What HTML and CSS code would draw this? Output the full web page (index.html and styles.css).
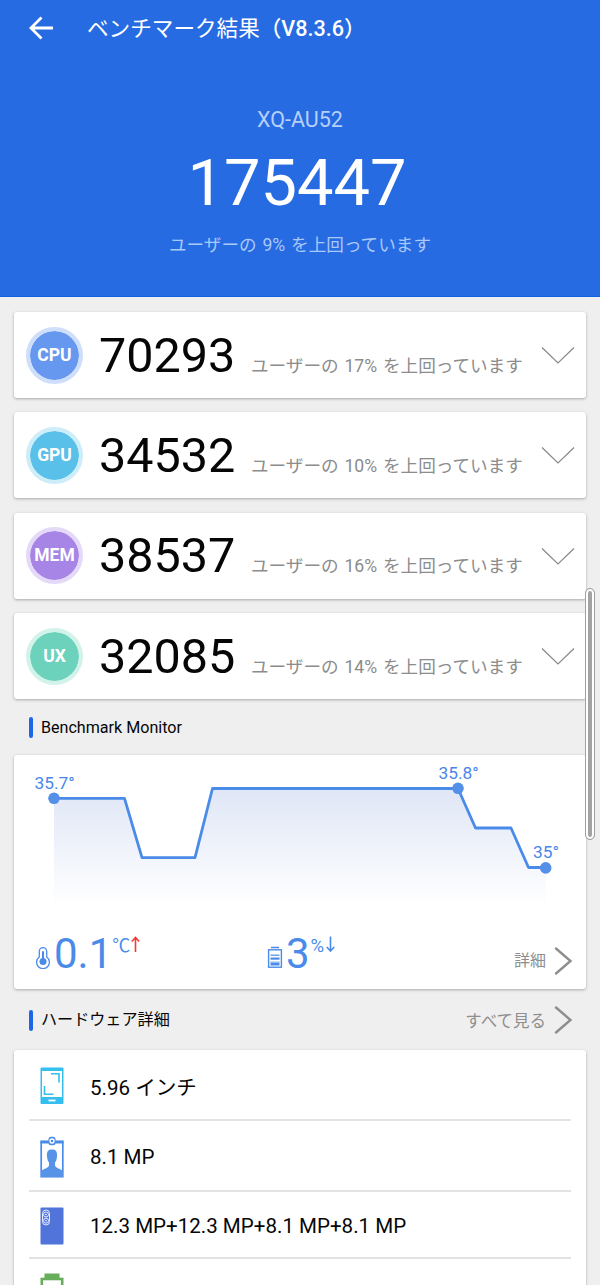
FILE: index.html
```html
<!DOCTYPE html>
<html lang="ja">
<head>
  <meta charset="UTF-8">
  <meta name="viewport" content="width=device-width, initial-scale=1">
  <title>ベンチマーク結果</title>
  <link rel="stylesheet" href="styles.css">
</head>
<body>
  <header class="header">
    <div class="topbar">
      <svg class="back" width="26" height="26" viewBox="0 0 26 26">
        <path d="M25 13H3M13.5 2.5L3 13L13.5 23.5" fill="none" stroke="#fff" stroke-width="2.8"/>
      </svg>
      <h1>ベンチマーク結果<span class="version">（V8.3.6）</span></h1>
    </div>
    <div class="device">XQ-AU52</div>
    <div class="total">175447</div>
    <div class="rank">ユーザーの 9% を上回っています</div>
  </header>

  <main>
    <section class="scores">
      <div class="card score">
        <div class="badge cpu">CPU</div>
        <div class="value">70293</div>
        <div class="note">ユーザーの 17% を上回っています</div>
        <svg class="chevron" width="34" height="20" viewBox="0 0 34 20"><path d="M1 2.500L17 18L33 2.500"/></svg>
      </div>
      <div class="card score">
        <div class="badge gpu">GPU</div>
        <div class="value">34532</div>
        <div class="note">ユーザーの 10% を上回っています</div>
        <svg class="chevron" width="34" height="20" viewBox="0 0 34 20"><path d="M1 2.500L17 18L33 2.500"/></svg>
      </div>
      <div class="card score">
        <div class="badge mem">MEM</div>
        <div class="value">38537</div>
        <div class="note">ユーザーの 16% を上回っています</div>
        <svg class="chevron" width="34" height="20" viewBox="0 0 34 20"><path d="M1 2.500L17 18L33 2.500"/></svg>
      </div>
      <div class="card score">
        <div class="badge ux">UX</div>
        <div class="value">32085</div>
        <div class="note">ユーザーの 14% を上回っています</div>
        <svg class="chevron" width="34" height="20" viewBox="0 0 34 20"><path d="M1 2.500L17 18L33 2.500"/></svg>
      </div>
    </section>

    <div class="section-title monitor-title">
      <h2>Benchmark Monitor</h2>
    </div>

    <section class="card monitor">
      <svg class="chart" width="572" height="165" viewBox="14 755 572 165">
        <defs>
          <linearGradient id="fade" gradientUnits="userSpaceOnUse" x1="0" y1="788" x2="0" y2="906">
            <stop offset="0" stop-color="#dfe6f6"/>
            <stop offset="1" stop-color="#fff"/>
          </linearGradient>
        </defs>
        <path fill="url(#fade)" d="M54 798H124.500L142 857.500H195L212.500 788.500H458L475.500 828H511L528.500 867.500H546V906H54Z"/>
        <path class="line" d="M54 798.300H124.500L142 857.700H195L212.500 788.500H458L475.500 828H511L528.500 867.500H546"/>
        <circle cx="54" cy="798.300" r="5.800"/>
        <circle cx="458" cy="788.300" r="5.800"/>
        <circle cx="545.700" cy="867.900" r="5.800"/>
        <text x="34.500" y="788.500">35.7°</text>
        <text x="438.500" y="778.500">35.8°</text>
        <text x="533" y="857.800">35°</text>
      </svg>
      <div class="stats">
        <div class="stat">
          <svg width="16" height="23" viewBox="0 0 16 23">
            <path d="M4.300 11V5.300a3.700 3.700 0 0 1 7.400 0V11a6.400 6.400 0 1 1-7.400 0Z" fill="none" stroke="#4a8be9" stroke-width="1.300"/>
            <circle cx="8" cy="15.600" r="3.500" fill="#4a8be9"/>
            <path d="M8 15V6" stroke="#4a8be9" stroke-width="2" stroke-linecap="round"/>
          </svg>
          <span class="number">0.1</span>
          <span class="unit celsius">℃</span>
          <svg class="arrow" width="9" height="17" viewBox="0 0 9 17"><path d="M4.500 16V1.500M.8 5.500L4.500 1.500L8.200 5.500" fill="none" stroke="#ef3b38" stroke-width="1.600"/></svg>
        </div>
        <div class="stat">
          <svg width="16" height="23" viewBox="0 0 16 23">
            <path d="M4 1.500H12" stroke="#4a8be9" stroke-width="1.500"/>
            <rect x="1.600" y="3.800" width="12.800" height="17.400" fill="none" stroke="#4a8be9" stroke-width="1.400"/>
            <path d="M3.500 9.200H12.500" stroke="#4a8be9" stroke-width="1.200"/>
            <path d="M3.500 12.600H12.500" stroke="#4a8be9" stroke-width="2.200"/>
            <path d="M3.500 17.500H12.500" stroke="#4a8be9" stroke-width="4"/>
            <path d="M3.500 16H12.500" stroke="#fff" stroke-width=".8"/>
          </svg>
          <span class="number">3</span>
          <span class="unit percent">%</span>
          <svg class="arrow" width="9" height="17" viewBox="0 0 9 17"><path d="M4.500 .5V15M.8 11L4.500 15L8.200 11" fill="none" stroke="#4a8be9" stroke-width="1.600"/></svg>
        </div>
        <div class="more">
          <span>詳細</span>
          <svg width="20" height="30" viewBox="0 0 20 30"><path d="M3 2.500L17.500 15L3 27.500"/></svg>
        </div>
      </div>
    </section>

    <div class="section-title hardware-title">
      <h2>ハードウェア詳細</h2>
      <div class="more">
        <span>すべて見る</span>
        <svg width="20" height="30" viewBox="0 0 20 30"><path d="M3 2.500L17.500 15L3 27.500"/></svg>
      </div>
    </div>

    <section class="card hardware">
      <div class="item screen">
        <svg width="24" height="38" viewBox="0 0 24 38">
          <rect x=".5" y=".5" width="23" height="36.500" rx="1" fill="#35bfee"/>
          <rect x="2" y="4" width="20" height="26" fill="#fff"/>
          <path d="M11 6.800H19V15.500M4.500 19V27.200H13.500" fill="none" stroke="#35bfee" stroke-width="1.600"/>
          <path d="M8.500 33.500H15.500" stroke="#fff" stroke-width="1.800"/>
        </svg>
        <span>5.96 インチ</span>
      </div>
      <div class="item front">
        <svg width="24" height="42" viewBox="0 0 24 42">
          <rect x="1.200" y="5.700" width="21.600" height="35" fill="#fff" stroke="#4a8be9" stroke-width="1.700"/>
          <path d="M.5 4.500H23.500V7.500H.5Z" fill="#4a8be9"/>
          <path d="M1 41V35C3 33 8.500 32 9 29.500V26.500C7.500 25 7.500 23.500 7 20.500C6.500 15 8.500 13.500 12 13.500S17.500 15 17 20.500C16.500 23.500 16.500 25 15 26.500V29.500C15.500 32 21 33 23 35V41Z" fill="#5794e8"/>
          <rect x="8.500" y=".8" width="7" height="8.500" rx="2.500" fill="#4a8be9"/>
          <circle cx="12" cy="5" r="2" fill="#4a8be9" stroke="#fff" stroke-width="1.300"/>
        </svg>
        <span>8.1 MP</span>
      </div>
      <div class="item rear">
        <svg width="24" height="38" viewBox="0 0 24 38">
          <rect x=".5" y=".5" width="23" height="37" rx="1" fill="#5174da"/>
          <rect x="2.500" y="3" width="7" height="15" rx="3.500" fill="none" stroke="#e3eafb" stroke-width="1"/>
          <circle cx="6" cy="7.500" r="2.500" fill="none" stroke="#e3eafb"/>
          <circle cx="6" cy="13.700" r="2.500" fill="none" stroke="#e3eafb"/>
          <path d="M5 7.500H7M5 13.700H7" stroke="#e3eafb"/>
        </svg>
        <span>12.3 MP+12.3 MP+8.1 MP+8.1 MP</span>
      </div>
      <div class="item battery">
        <svg width="24" height="38" viewBox="0 0 24 38">
          <rect x="1.800" y="6" width="20.400" height="31" fill="none" stroke="#68ad5b" stroke-width="2.600"/>
          <path d="M4.500 .5H19.500V6.500H4.500Z" fill="#68ad5b"/>
        </svg>
        <span>3700 mAh</span>
      </div>
    </section>
  </main>

  <div class="scrollbar"></div>
</body>
</html>
```

FILE: styles.css
```css
* {
  box-sizing: border-box;
}

body {
  margin: 0;
  height: 1285px;
  overflow: hidden;
  position: relative;
  background: #efefef;
  color: #060606;
  font-family: Roboto, "Noto Sans CJK JP", sans-serif;
  white-space: nowrap;
}

h1,
h2 {
  margin: 0;
  font-weight: 400;
}

.header {
  height: 297px;
  background: #266be1;
  color: #fff;
  text-align: center;
  border-bottom: 1px solid #1163e6;
}

.topbar {
  display: flex;
  align-items: center;
  height: 56px;
  padding-left: 28px;
}

.topbar h1 {
  margin-left: 33px;
  padding-top: 2px;
  font-size: 21.6px;
  line-height: 32px;
}

.version {
  font-weight: 500;
}

.device {
  margin-top: 49px;
  font-size: 21.5px;
  line-height: 30px;
  color: #b6d0fa;
}

.total {
  margin-top: 8px;
  padding-right: 6px;
  font-size: 65px;
  line-height: 80px;
}

.rank {
  margin-top: 9px;
  font-size: 17.6px;
  line-height: 26px;
  word-spacing: 1.5px;
  color: #a9c8fb;
}

main {
  padding: 15px 14px 0;
}

.card {
  background: #fff;
  border-radius: 3px;
  box-shadow: 0 1px 3px rgba(0, 0, 0, 0.3);
}

.scores {
  display: flex;
  flex-direction: column;
  gap: 14.4px;
}

.score {
  display: flex;
  align-items: center;
  height: 86px;
  padding: 0 11px 0 12px;
}

.badge {
  width: 57px;
  height: 57px;
  border: 4px solid;
  border-radius: 50%;
  background-clip: padding-box;
  color: #fff;
  font-size: 17.5px;
  font-weight: 700;
  line-height: 49px;
  text-align: center;
}

.cpu {
  background-color: #6698f0;
  border-color: #cfdffb;
}

.gpu {
  background-color: #59c0e9;
  border-color: #cdedf9;
}

.mem {
  background-color: #a785e6;
  border-color: #e4d9f8;
}

.ux {
  background-color: #6cd2bb;
  border-color: #d2f2ea;
}

.value {
  width: 152px;
  margin-left: 16px;
  padding-top: 1px;
  font-size: 48.5px;
  line-height: 60px;
}

.note {
  margin-top: 21px;
  font-size: 17.6px;
  line-height: 26px;
  word-spacing: 1.5px;
  color: #8c8c8c;
}

.chevron {
  margin-left: auto;
}

.chevron path {
  fill: none;
  stroke: #888;
  stroke-width: 1.2;
}

.section-title {
  display: flex;
  align-items: center;
  justify-content: space-between;
  padding: 0 13px 0 15px;
}

.section-title h2 {
  display: flex;
  align-items: center;
  font-size: 16.1px;
  line-height: 24px;
}

.section-title h2::before {
  content: "";
  width: 4px;
  height: 21px;
  margin-right: 8px;
  border-radius: 2px;
  background: #1c67e8;
}

.monitor-title {
  height: 55.8px;
  padding-top: 1px;
}

.hardware-title {
  height: 61.5px;
  padding-top: 1px;
}

.monitor {
  height: 234px;
}

.chart {
  display: block;
}

.chart text {
  fill: #4886ea;
  font-size: 17.3px;
}

.chart circle {
  fill: #5590e8;
}

.line {
  fill: none;
  stroke: #4a8be9;
  stroke-width: 2.8;
  stroke-linejoin: round;
}

.stats {
  display: grid;
  grid-template-columns: 232px 180px 1fr;
  height: 69px;
  padding: 0 13px 0 21px;
}

.stat {
  display: flex;
  align-items: flex-start;
  color: #4a8be9;
}

.stat > svg:first-child {
  margin-top: 26px;
}

.number {
  margin-left: 3px;
  font-size: 42px;
  line-height: 50px;
  margin-top: 9px;
}

.unit {
  margin-top: 16px;
  font-size: 18px;
  line-height: 20px;
}

.percent {
  margin: 16px 1px 0;
  font-size: 18.5px;
}

.arrow {
  margin: 16px 0 0 1px;
}

.more {
  display: flex;
  align-items: center;
  justify-content: flex-end;
  font-size: 16px;
  color: #8e8e8e;
}

.more svg {
  margin-left: 7px;
}

.more path {
  fill: none;
  stroke: #8e8e8e;
  stroke-width: 2.4;
  stroke-linecap: round;
}

.stats .more {
  padding-top: 13px;
}

.stats .more span {
  padding-bottom: 4px;
}

.hardware-title .more {
  font-size: 16.5px;
}

.hardware {
  padding: 0 15px;
}

.item {
  display: flex;
  align-items: center;
  height: 70.6px;
  padding: 2px 0 0 11px;
  border-bottom: 2px solid #e3e3e3;
  font-size: 20.55px;
}

.item span {
  margin-left: 26px;
}

.screen {
  height: 71px;
  padding-top: 3px;
}

.rear {
  height: 67px;
  padding-top: 2px;
}

.battery {
  height: 66px;
  padding-top: 0;
  border-bottom: none;
}

.battery span {
  padding-top: 4px;
}

.scrollbar {
  position: absolute;
  left: 585px;
  top: 588px;
  width: 10px;
  height: 252px;
  border: 1px solid #a0a0a0;
  border-radius: 5px;
  background: #a3a3a3;
  box-shadow: inset 0 0 0 2px #fff;
}
```
